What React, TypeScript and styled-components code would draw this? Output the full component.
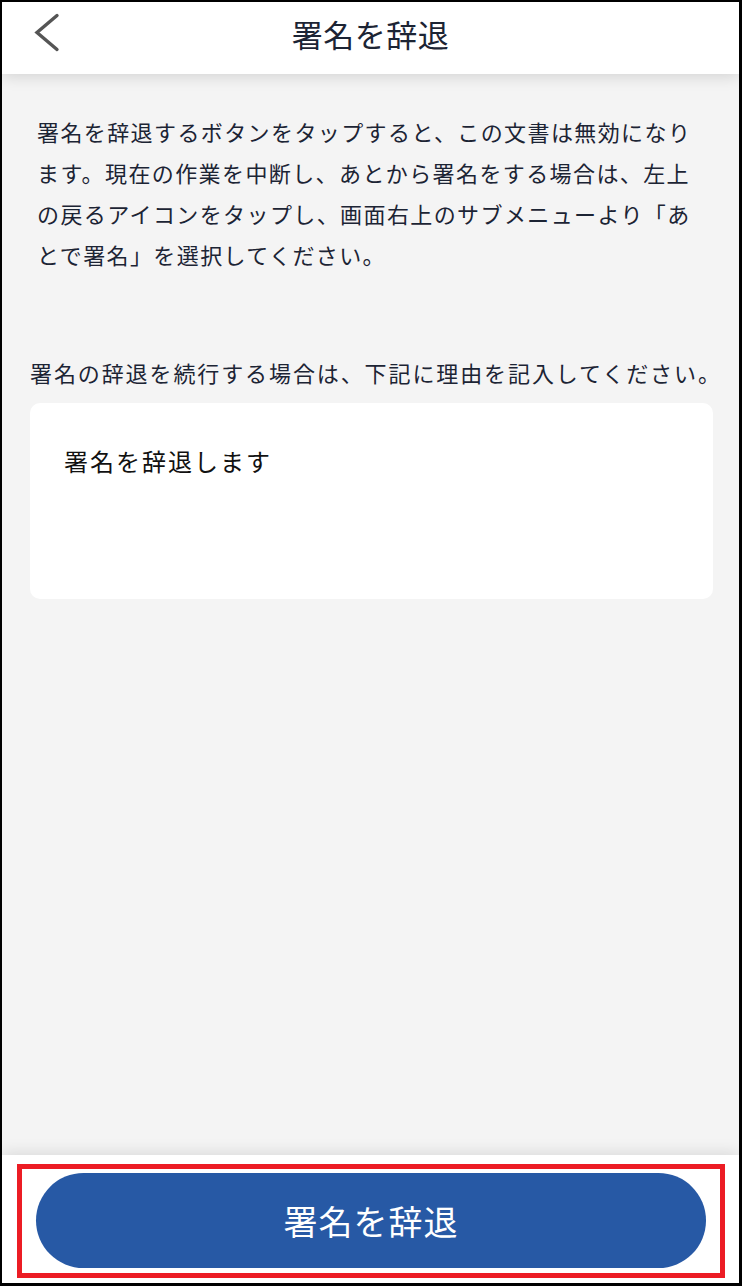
import styled, { createGlobalStyle } from 'styled-components';

const GlobalStyle = createGlobalStyle`
  html, body {
    margin: 0;
    padding: 0;
    background: #000;
  }
  body {
    font-family: "Noto Sans CJK JP", "Noto Sans", sans-serif;
  }
  * {
    box-sizing: border-box;
  }
`;

const Frame = styled.div`
  margin: 2px 3px 3px 2px;
  height: 1281px;
  display: flex;
  flex-direction: column;
  background: #f4f4f4;
  overflow: hidden;
`;

const Header = styled.header`
  position: relative;
  z-index: 2;
  height: 72px;
  flex-shrink: 0;
  padding: 0 32px 10px;
  display: grid;
  grid-template-columns: 1fr auto 1fr;
  align-items: center;
  background: #fff;
  box-shadow: 0 3px 14px rgba(0, 0, 0, 0.13);
`;

const BackButton = styled.button`
  justify-self: start;
  width: 26px;
  height: 40px;
  padding: 0;
  border: none;
  background: none;
  display: flex;
  cursor: pointer;
`;

const Title = styled.h1`
  margin: 0;
  font-size: 31px;
  font-weight: 400;
  color: #1c2434;
  letter-spacing: 0.5px;
`;

const Main = styled.main`
  flex: 1;
  padding: 37px 26px 0 28px;
  display: flex;
  flex-direction: column;
`;

const Notice = styled.p`
  margin: 0 9px 0 7px;
  font-size: 22px;
  line-height: 41px;
  letter-spacing: 1.4px;
  color: #1c2434;
`;

const Label = styled.p`
  margin: 77px 0 10px;
  font-size: 22px;
  line-height: 41px;
  letter-spacing: 1.9px;
  color: #1c2434;
  white-space: nowrap;
`;

const Reason = styled.textarea`
  display: block;
  width: 100%;
  height: 196px;
  padding: 41px 34px 20px;
  border: none;
  border-radius: 10px;
  background: #fff;
  resize: none;
  outline: none;
  font-family: inherit;
  font-size: 24px;
  line-height: 34px;
  letter-spacing: 2px;
  color: #111;
`;

const Footer = styled.footer`
  position: relative;
  z-index: 2;
  height: 128px;
  flex-shrink: 0;
  padding: 9px 14px 5px 15px;
  background: #fff;
  box-shadow: 0 -3px 14px rgba(0, 0, 0, 0.1);
`;

const Highlight = styled.div`
  height: 100%;
  border: 5px solid #ec1c24;
  padding: 4px 14px 5px;
`;

const PrimaryButton = styled.button`
  width: 100%;
  height: 100%;
  border: none;
  border-radius: 999px;
  background: #2759a5;
  color: #fff;
  font-family: inherit;
  font-size: 34px;
  font-weight: 400;
  letter-spacing: 1px;
  cursor: pointer;
`;

export default function App() {
  return (
    <>
      <GlobalStyle />
      <Frame>
        <Header>
          <BackButton aria-label="戻る">
            <svg width="26" height="40" viewBox="0 0 26 40">
              <polyline
                points="23,2.5 3,19.5 23,36.5"
                fill="none"
                stroke="#555"
                strokeWidth="3.4"
                strokeLinecap="round"
                strokeLinejoin="miter"
              />
            </svg>
          </BackButton>
          <Title>署名を辞退</Title>
          <span />
        </Header>
        <Main>
          <Notice>
            署名を辞退するボタンをタップすると、この文書は無効になります。現在の作業を中断し、あとから署名をする場合は、左上の戻るアイコンをタップし、画面右上のサブメニューより「あとで署名」を選択してください。
          </Notice>
          <Label>署名の辞退を続行する場合は、下記に理由を記入してください。</Label>
          <Reason defaultValue="署名を辞退します" />
        </Main>
        <Footer>
          <Highlight>
            <PrimaryButton>署名を辞退</PrimaryButton>
          </Highlight>
        </Footer>
      </Frame>
    </>
  );
}
